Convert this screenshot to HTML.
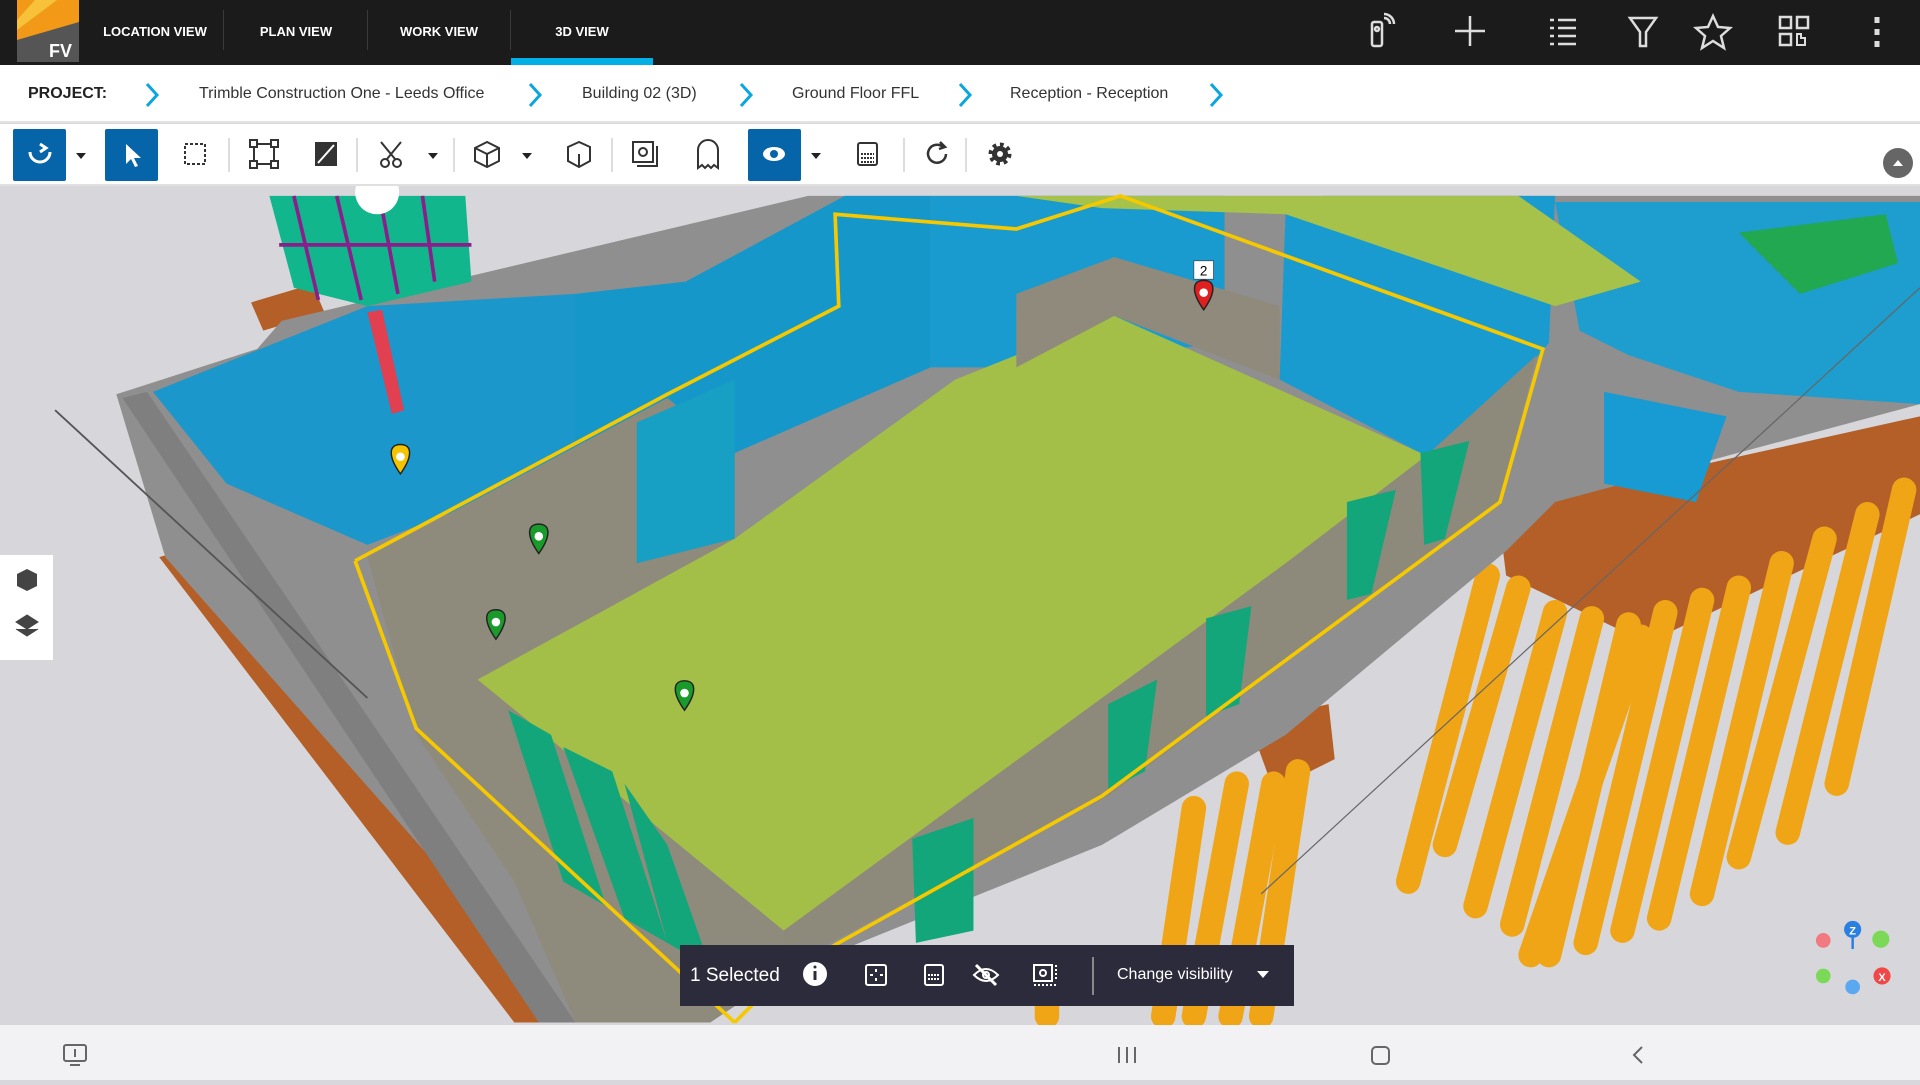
<!DOCTYPE html>
<html><head><meta charset="utf-8"><style>
*{margin:0;padding:0;box-sizing:border-box}
body{width:1920px;height:1080px;overflow:hidden;background:#d8d8dc;font-family:"Liberation Sans",sans-serif;position:relative}
#scene{position:absolute;left:0;top:0}
.top{position:absolute;left:0;top:0;width:1920px;height:65px;background:#1b1b1b}
.tab{position:absolute;top:0;height:65px;line-height:63px;color:#fff;font-size:13px;font-weight:bold;text-align:center}
.sep{position:absolute;top:10px;width:1px;height:40px;background:#3a3a3a}
.crumb{position:absolute;left:0;top:65px;width:1920px;height:58px;background:#fff;border-bottom:2px solid #e2e2e2}
.crumb span{position:absolute;top:20px;font-size:16px;color:#333}
.chev{position:absolute;top:17px}
.tool{position:absolute;left:0;top:124px;width:1920px;height:62px;background:#fff;border-bottom:2px solid #e0e0e0}
.btn{position:absolute;top:5px;width:53px;height:52px;background:#0664a8;border-radius:2px}
.bottom{position:absolute;left:0;top:1025px;width:1920px;height:55px;background:#f2f2f4}
.sel{position:absolute;left:680px;top:945px;width:614px;height:61px;background:#2c2b3b;color:#fff}
.left{position:absolute;left:0;top:555px;width:53px;height:105px;background:#fff}
</style></head><body>
<svg id="scene" width="1920" height="1080" viewBox="0 0 1568 882">
<rect x="0" y="150" width="1568" height="690" fill="#d7d7db"/>
<polygon points="205,247 255,232 265,255 215,270" fill="#b45f28"/>
<polygon points="130,455 165,445 480,835 420,835" fill="#b45f28"/>
<polygon points="1225,430 1275,405 1568,340 1568,420 1345,525 1230,470" fill="#b45f28"/>
<polygon points="1020,590 1085,575 1090,620 1040,645" fill="#b45f28"/>
<g stroke="#f0a516" stroke-width="20" stroke-linecap="round">
<line x1="1215" y1="470" x2="1150" y2="720"/><line x1="1240" y1="480" x2="1180" y2="690"/>
<line x1="1270" y1="500" x2="1205" y2="740"/><line x1="1300" y1="505" x2="1235" y2="755"/>
<line x1="1330" y1="510" x2="1265" y2="780"/><line x1="1360" y1="500" x2="1295" y2="770"/>
<line x1="1390" y1="490" x2="1325" y2="760"/><line x1="1420" y1="480" x2="1355" y2="750"/>
<line x1="1455" y1="460" x2="1390" y2="730"/><line x1="1490" y1="440" x2="1420" y2="700"/>
<line x1="1525" y1="420" x2="1460" y2="680"/><line x1="1555" y1="400" x2="1500" y2="640"/>
<line x1="1340" y1="520" x2="1250" y2="780"/>
<line x1="1010" y1="640" x2="975" y2="830"/><line x1="1040" y1="640" x2="1005" y2="830"/>
<line x1="1060" y1="630" x2="1030" y2="830"/><line x1="975" y1="660" x2="950" y2="830"/>
<line x1="855" y1="810" x2="855" y2="830"/>
</g>
<polygon points="95,322 210,285 230,262 660,160 1568,160 1568,330 1270,410 1230,450 1050,600 900,690 640,795 580,835 470,835 135,455" fill="#8f8f8f"/>
<polygon points="100,325 120,320 470,835 440,835" fill="#7f7f7f"/>
<polygon points="125,320 300,250 470,240 470,380 300,445 185,395" fill="#1b97cc"/>
<polygon points="470,240 560,230 690,160 760,160 760,300 600,370 520,420 470,380" fill="#1597c9"/>
<polygon points="760,160 1000,160 1000,280 830,300 760,300" fill="#1a9bd0"/>
<polygon points="1080,160 1270,160 1265,280 1180,380 1160,370 1045,310 1050,170" fill="#1a9bd0"/>
<polygon points="1270,165 1568,165 1568,330 1420,320 1330,290 1290,270" fill="#1e9dcf"/>
<polygon points="1310,320 1410,340 1385,410 1310,395" fill="#189ad2"/>
<polygon points="830,160 1240,160 1340,230 1270,250 1050,175 900,170" fill="#a6c24a"/>
<polygon points="1420,190 1540,175 1550,215 1470,240" fill="#22a850"/>
<polygon points="220,160 380,160 385,230 300,250 240,235" fill="#11b68c"/>
<g stroke="#8a1f8c" stroke-width="3"><line x1="240" y1="160" x2="260" y2="245"/><line x1="275" y1="160" x2="295" y2="245"/><line x1="310" y1="160" x2="325" y2="240"/><line x1="345" y1="160" x2="355" y2="230"/><line x1="228" y1="200" x2="385" y2="200"/></g>
<polygon points="300,255 312,253 330,335 320,338" fill="#e04050"/>
<polygon points="300,455 545,325 600,370 600,440 390,555 340,600" fill="#8f8b7c"/>
<polygon points="520,345 600,310 600,440 520,460" fill="#17a0c3"/>
<polygon points="390,555 600,440 780,310 910,258 1165,372 1050,460 900,570 640,760" fill="#a4bf47"/>
<polygon points="1165,372 1255,290 1225,410 905,650 640,790 640,760 900,570 1050,460" fill="#8d8a7c"/>
<polygon points="830,300 910,258 1045,310 1045,250 910,210 830,240" fill="#8f8a7b"/>
<polygon points="340,600 390,555 640,760 640,795 580,835 470,835 420,720" fill="#8f8b7c"/>
<g fill="#13a67a"><polygon points="415,580 450,600 495,740 460,720"/><polygon points="460,610 500,630 545,770 510,750"/><polygon points="510,640 545,690 580,790 545,770"/>
<polygon points="1100,410 1140,400 1120,485 1100,490"/><polygon points="1160,370 1200,360 1180,440 1163,445"/>
<polygon points="905,575 945,555 935,630 905,645"/><polygon points="985,505 1022,495 1012,575 985,585"/>
<polygon points="745,685 795,668 795,760 748,770"/></g>
<polyline points="290,458 545,322 685,250 682,175 830,187 915,160 1260,285 1225,410 900,650 640,795 600,835" fill="none" stroke="#f5c800" stroke-width="3"/>
<polyline points="290,458 340,595 600,835" fill="none" stroke="#f5c800" stroke-width="3"/>
<line x1="45" y1="335" x2="300" y2="570" stroke="#555" stroke-width="1.5"/>
<line x1="1568" y1="235" x2="1030" y2="730" stroke="#666" stroke-width="1"/>
<g stroke="#222" stroke-width="1.2">
<path d="M327,387 c-10,-14 -10,-24 0,-24 c10,0 10,10 0,24z" fill="#f5c400"/>
<path d="M440,452 c-10,-14 -10,-24 0,-24 c10,0 10,10 0,24z" fill="#1a9a2a"/>
<path d="M405,522 c-10,-14 -10,-24 0,-24 c10,0 10,10 0,24z" fill="#1a9a2a"/>
<path d="M559,580 c-10,-14 -10,-24 0,-24 c10,0 10,10 0,24z" fill="#1a9a2a"/>
<path d="M983,253 c-10,-14 -10,-24 0,-24 c10,0 10,10 0,24z" fill="#e02020"/>
</g>
<g fill="#fff"><circle cx="327" cy="373" r="3.5"/><circle cx="440" cy="438" r="3.5"/><circle cx="405" cy="508" r="3.5"/><circle cx="559" cy="566" r="3.5"/><circle cx="983" cy="239" r="3.5"/></g>
<rect x="975" y="213" width="16" height="15" fill="#fff" stroke="#333" stroke-width="0.5"/><text x="983" y="225" font-size="11" text-anchor="middle" font-family="Liberation Sans">2</text>
<circle cx="308" cy="157" r="18" fill="#fff"/>
<line x1="1513" y1="775" x2="1513" y2="760" stroke="#2a7fe0" stroke-width="2"/>
<circle cx="1513" cy="759" r="7" fill="#2a7fe0"/><text x="1513" y="763" font-size="9" fill="#fff" text-anchor="middle" font-family="Liberation Sans" font-weight="bold">Z</text>
<circle cx="1536" cy="767" r="7" fill="#7bd957"/><circle cx="1537" cy="797" r="7" fill="#f04848"/><text x="1537" y="801" font-size="9" fill="#fff" text-anchor="middle" font-family="Liberation Sans" font-weight="bold">X</text>
<circle cx="1489" cy="768" r="6" fill="#f07a80"/><circle cx="1489" cy="797" r="6" fill="#7bd957"/><circle cx="1513" cy="806" r="6" fill="#5aa8f0"/>
</svg>

<div class="top">
<div style="position:absolute;left:17px;top:0;width:62px;height:62px;background:#555;overflow:hidden">
<svg width="62" height="62"><polygon points="0,0 62,0 62,22 0,40" fill="#f29a18"/><polygon points="18,0 40,0 0,30 0,20" fill="#f7c23a"/><text x="32" y="57" fill="#fff" font-size="18" font-weight="bold" font-family="Liberation Sans">FV</text></svg></div>
<div class="tab" style="left:95px;width:120px">LOCATION VIEW</div>
<div class="sep" style="left:223px"></div>
<div class="tab" style="left:236px;width:120px">PLAN VIEW</div>
<div class="sep" style="left:367px"></div>
<div class="tab" style="left:379px;width:120px">WORK VIEW</div>
<div class="sep" style="left:510px"></div>
<div class="tab" style="left:511px;width:142px">3D VIEW</div>
<div style="position:absolute;left:511px;top:58px;width:142px;height:7px;background:#02b0e6"></div>
<svg style="position:absolute;left:1360px;top:12px" width="560" height="40" stroke="#ddd" fill="none" stroke-width="2.5">
<rect x="12" y="10" width="10" height="24" rx="2"/><circle cx="17" cy="17" r="2"/><path d="M24 6a6 6 0 0 1 6 6M24 2a10 10 0 0 1 10 10"/>
<path d="M110 4v30M95 19h30"/>
<path d="M190 8h4M190 16h4M190 24h4M190 32h4M198 8h18M198 16h18M198 24h18M198 32h18"/>
<path d="M270 6h26l-10 14v14h-6v-14z"/>
<path d="M353 4l5 11 12 1-9 8 3 12-11-7-11 7 3-12-9-8 12-1z"/>
<rect x="420" y="5" width="11" height="11"/><rect x="437" y="5" width="11" height="11"/><rect x="420" y="22" width="11" height="11"/><path d="M437 22h4v4h4v7h-8z" stroke-width="2"/>
<path d="M517 5v6M517 17v6M517 29v6" stroke-width="5"/>
</svg>
</div>

<div class="crumb">
<span style="left:28px;font-weight:bold;color:#222">PROJECT:</span>
<svg class="chev" style="left:142px" width="20" height="26"><path d="M5 2l10 11-10 11" stroke="#0aa6df" stroke-width="3" fill="none"/></svg>
<span style="left:199px">Trimble Construction One - Leeds Office</span>
<svg class="chev" style="left:525px" width="20" height="26"><path d="M5 2l10 11-10 11" stroke="#0aa6df" stroke-width="3" fill="none"/></svg>
<span style="left:582px">Building 02 (3D)</span>
<svg class="chev" style="left:736px" width="20" height="26"><path d="M5 2l10 11-10 11" stroke="#0aa6df" stroke-width="3" fill="none"/></svg>
<span style="left:792px">Ground Floor FFL</span>
<svg class="chev" style="left:955px" width="20" height="26"><path d="M5 2l10 11-10 11" stroke="#0aa6df" stroke-width="3" fill="none"/></svg>
<span style="left:1010px">Reception - Reception</span>
<svg class="chev" style="left:1206px" width="20" height="26"><path d="M5 2l10 11-10 11" stroke="#0aa6df" stroke-width="3" fill="none"/></svg>
</div>

<div class="tool">
<div class="btn" style="left:13px"></div>
<div class="btn" style="left:105px"></div>
<div class="btn" style="left:748px"></div>
<svg style="position:absolute;left:0;top:0" width="1920" height="62" fill="none" stroke="#333" stroke-width="2">
<path d="M30 28a10 10 0 1 0 20 0" stroke="#fff" stroke-width="3"/><path d="M40 20l6 4-6 4" stroke="#fff" stroke-width="3"/>
<path d="M76 29h10l-5 6z" fill="#222" stroke="none"/>
<path d="M126 20v20l5-5 4 8 3-1-4-8h7z" fill="#fff" stroke="none"/>
<rect x="185" y="20" width="20" height="20" stroke-dasharray="3 2"/>
<line x1="229" y1="14" x2="229" y2="48" stroke="#ddd"/>
<rect x="254" y="20" width="20" height="20"/><rect x="250" y="16" width="7" height="7" fill="#fff"/><rect x="271" y="16" width="7" height="7" fill="#fff"/><rect x="250" y="37" width="7" height="7" fill="#fff"/><rect x="271" y="37" width="7" height="7" fill="#fff"/>
<rect x="316" y="19" width="20" height="22" fill="#333"/><path d="M318 39l16-18" stroke="#fff"/>
<line x1="357" y1="14" x2="357" y2="48" stroke="#ddd"/>
<circle cx="385" cy="39" r="4"/><circle cx="397" cy="39" r="4"/><path d="M387 35l14-17M395 35l-14-17"/>
<path d="M428 29h10l-5 6z" fill="#222" stroke="none"/>
<line x1="454" y1="14" x2="454" y2="48" stroke="#ddd"/>
<path d="M487 18l-12 6v13l12 6 12-6v-13zM475 24l12 6 12-6M487 30v13"/>
<path d="M522 29h10l-5 6z" fill="#222" stroke="none"/>
<path d="M579 18l-11 5v14l11 6 11-6v-14zM579 30v13"/>
<line x1="612" y1="14" x2="612" y2="48" stroke="#ddd"/>
<rect x="633" y="18" width="20" height="20"/><circle cx="643" cy="28" r="4"/><path d="M637 42h20v-20"/>
<path d="M698 44v-18a10 10 0 0 1 20 0v18l-4-3-3 3-3-3-3 3-3-3z"/>
<ellipse cx="774" cy="30" rx="11" ry="7" fill="#fff" stroke="none"/><circle cx="774" cy="30" r="4" fill="#0664a8" stroke="none"/>
<path d="M811 29h10l-5 6z" fill="#222" stroke="none"/>
<rect x="858" y="19" width="19" height="22" rx="2"/><path d="M861 30h13M861 34h13M861 38h13" stroke-dasharray="2 1"/>
<line x1="904" y1="14" x2="904" y2="48" stroke="#ddd"/>
<path d="M943 23a9 9 0 1 0 3 7" stroke-width="2.5"/><path d="M940 18l5 5-6 2" stroke-width="2.5"/>
<line x1="966" y1="14" x2="966" y2="48" stroke="#ddd"/>
<circle cx="1000" cy="30" r="8" fill="#333" stroke="none"/><circle cx="1000" cy="30" r="9.5" stroke-width="4" stroke-dasharray="3.7 3.7"/><circle cx="1000" cy="30" r="3" fill="#fff" stroke="none"/>
<circle cx="1898" cy="39" r="15" fill="#666" stroke="none"/><path d="M1893 42h10l-5-6z" fill="#fff" stroke="none"/>
</svg>
</div>

<div class="left">
<svg width="53" height="105"><path d="M27 14l-10 5v12l10 5 10-5v-12z" fill="#444"/><path d="M27 60l-11 7 11 7 11-7z M16 74l11 7 11-7" fill="#444" stroke="#444"/></svg>
</div>

<div class="sel">
<div style="position:absolute;left:10px;top:20px;font-size:19px">1 Selected</div>
<svg style="position:absolute;left:0;top:0" width="614" height="61" fill="none" stroke="#fff" stroke-width="2">
<circle cx="135" cy="29" r="11" fill="#fff"/><path d="M135 26v9" stroke="#2c2b3b" stroke-width="3"/><circle cx="135" cy="22" r="1.5" fill="#2c2b3b" stroke="none"/>
<rect x="186" y="20" width="20" height="20" rx="2"/><path d="M196 24v3M196 33v3M190 30h3M200 30h3"/>
<rect x="245" y="20" width="18" height="20" rx="2"/><path d="M248 30h12M248 34h12" stroke-dasharray="2 1"/>
<path d="M294 30q12-12 24 0q-12 12-24 0z"/><circle cx="306" cy="30" r="3"/><path d="M296 20l20 20" stroke-width="3"/>
<rect x="354" y="20" width="18" height="16"/><circle cx="363" cy="28" r="3"/><path d="M354 40h22M376 20v16" stroke-dasharray="2 2"/>
<line x1="413" y1="12" x2="413" y2="50" stroke="#888"/>
<path d="M577 26h12l-6 7z" fill="#fff" stroke="none"/>
</svg>
<div style="position:absolute;left:437px;top:21px;font-size:16px">Change visibility</div>
</div>

<div class="bottom">
<svg width="1920" height="55" fill="none" stroke="#666" stroke-width="2">
<rect x="64" y="20" width="22" height="16" rx="2"/><path d="M70 40h10M75 24v8"/>
<path d="M1119 22v16M1127 22v16M1135 22v16"/>
<rect x="1372" y="22" width="17" height="17" rx="4"/>
<path d="M1642 22l-8 8 8 8"/>
</svg>
</div>
</body></html>
